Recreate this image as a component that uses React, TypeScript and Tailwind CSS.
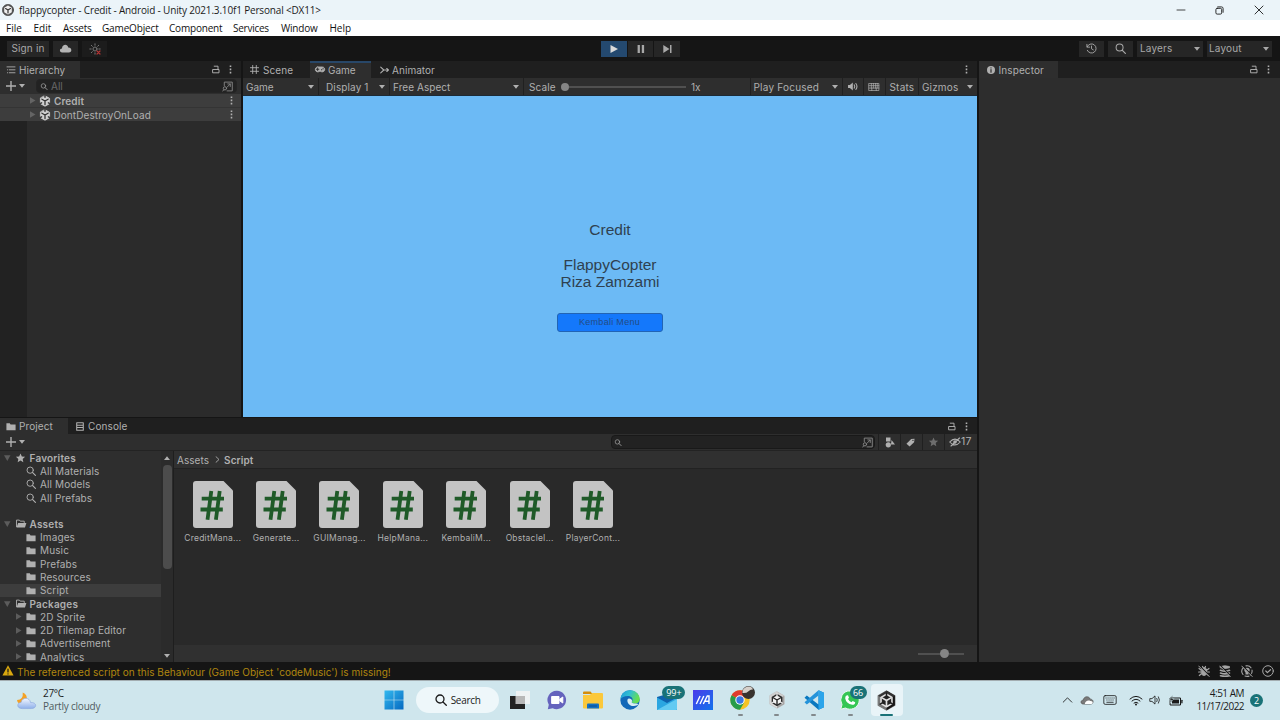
import type { ReactNode } from "react";

type IconProps = { className?: string; box?: string; children: ReactNode };

function Icon({ className = "w-[11px] h-[11px]", box = "0 0 16 16", children }: IconProps) {
  return (
    <svg
      viewBox={box}
      className={`shrink-0 ${className}`}
      fill="none"
      stroke="currentColor"
      strokeWidth="1.4"
      strokeLinecap="round"
      strokeLinejoin="round"
    >
      {children}
    </svg>
  );
}

const Caret = ({ className = "" }: { className?: string }) => (
  <Icon box="0 0 6 4" className={`w-[6px] h-[4px] ${className}`}>
    <path d="M0 0h6L3 3.8z" fill="currentColor" stroke="none" />
  </Icon>
);

const Dots = ({ className = "" }: { className?: string }) => (
  <Icon box="0 0 3 9" className={`w-[3px] h-[9px] ${className}`}>
    <path d="M.7.4h1.6v1.6H.7zM.7 3.6h1.6v1.6H.7zM.7 6.8h1.6v1.6H.7z" fill="currentColor" stroke="none" />
  </Icon>
);

const Lock = ({ className = "" }: { className?: string }) => (
  <Icon box="0 0 8 9" className={`w-[8px] h-[9px] ${className}`}>
    <path d="M1 4.500h6v3.300H1zM2.200 1.200H6v3.300" strokeWidth=".95" />
  </Icon>
);

const Plus = () => (
  <Icon box="0 0 12 12" className="w-[12px] h-[12px]">
    <path d="M6 1v10M1 6h10" strokeWidth="1.4" strokeLinecap="butt" />
  </Icon>
);

const Magnifier = ({ className = "w-[10px] h-[10px]" }: { className?: string }) => (
  <Icon box="0 0 12 12" className={className}>
    <circle cx="5" cy="5" r="3.8" strokeWidth="1.1" />
    <path d="m8 8 3.3 3.3" strokeWidth="1.4" />
  </Icon>
);

const SearchPick = () => (
  <Icon box="0 0 12 12" className="w-[11px] h-[11px]">
    <path d="M2.500 5V1.200h8.700v9.600H5.500M5.500 6.800 9 3.200M6.300 3.200H9V6" strokeWidth="1" />
    <circle cx="3.2" cy="8" r="1.8" strokeWidth="1" />
    <path d="M2 9.500.8 11" strokeWidth="1" />
  </Icon>
);

const UnityScene = () => (
  <Icon box="0 0 12 12" className="w-[12px] h-[12px]">
    <path
      d="M6 .8 10.6 3.3v5.4L6 11.2 1.4 8.7V3.3z"
      fill="#d0d0d0"
      stroke="#d0d0d0"
      strokeWidth=".8"
    />
    <path d="M6 6v3.600M6 6 2.900 4.200M6 6l3.100-1.800" stroke="#333" strokeWidth="1.300" />
    <path d="M6 0v2.200M.6 8.900l2-1.100M11.400 8.900l-2-1.100" stroke="#3c3c3c" strokeWidth="1.500" />
  </Icon>
);

const Folder = () => (
  <Icon box="0 0 12 10" className="w-[10px] h-[9px]">
    <path d="M.5 1h4l1 1.6h6V9.5H.5z" fill="currentColor" stroke="none" />
  </Icon>
);

const FolderOpen = () => (
  <Icon box="0 0 12 10" className="w-[12px] h-[9px]">
    <path d="M1 8.5V1.2h3.2l1 1.2H9.6V4" strokeWidth="1" />
    <path d="M2.8 4.4h9.2L10.4 9.4H1z" fill="currentColor" stroke="none" />
  </Icon>
);

const Star = ({ className = "w-[11px] h-[11px]" }: { className?: string }) => (
  <Icon box="0 0 12 12" className={className}>
    <path d="m6 .6 1.6 3.6 3.9.4-2.9 2.6.8 3.9L6 9.1l-3.4 2 .8-3.9L.5 4.6l3.9-.4z" fill="currentColor" stroke="none" />
  </Icon>
);

function TitleBar() {
  return (
    <div className="flex h-[20px] shrink-0 items-center bg-[#ebf4f9] font-['Open_Sans',sans-serif] text-[10px] text-[#1b1b1b]">
      <Icon box="0 0 12 12" className="ml-[2px] h-[12px] w-[12px]">
        <circle cx="6" cy="6" r="5.7" fill="#555" stroke="#333" strokeWidth=".5" />
        <path d="m6 1.6 3.8 2.1v4.500L6 10.400 2.200 8.200V3.700z" fill="#eee" stroke="none" />
        <path d="M6 6v3M6 6 3.600 4.600M6 6l2.400-1.400" stroke="#333" strokeWidth="1.200" />
      </Icon>
      <span className="ml-[5px] w-[320px] whitespace-nowrap tracking-[-0.165px]">
        flappycopter - Credit - Android - Unity 2021.3.10f1 Personal &lt;DX11&gt;
      </span>
      <div className="ml-auto flex items-center pr-[16px]">
        <Icon box="0 0 10 10" className="mr-[29px] h-[10px] w-[10px]">
          <path d="M1 5h8" strokeWidth=".8" />
        </Icon>
        <Icon box="0 0 10 10" className="mr-[30px] h-[9px] w-[9px]">
          <rect x="1" y="2.6" width="6.4" height="6.4" rx="1.4" strokeWidth="1" />
          <path d="M3 1h4.2Q9 1 9 2.8V7" strokeWidth="1" />
        </Icon>
        <Icon box="0 0 10 10" className="h-[10px] w-[10px]">
          <path d="m1 1 8 8M9 1 1 9" strokeWidth=".9" />
        </Icon>
      </div>
    </div>
  );
}

function MenuBar() {
  return (
    <div className="flex h-[16px] shrink-0 items-center bg-white pl-[6px] font-['Open_Sans',sans-serif] text-[10px] text-[#111]">
      <span className="w-[27.500px]">File</span>
      <span className="w-[29.500px]">Edit</span>
      <span className="w-[39px] tracking-[-0.2px]">Assets</span>
      <span className="w-[67px] tracking-[-0.15px]">GameObject</span>
      <span className="w-[64px] tracking-[-0.2px]">Component</span>
      <span className="w-[48px] tracking-[-0.25px]">Services</span>
      <span className="w-[48.500px] tracking-[-0.2px]">Window</span>
      <span>Help</span>
    </div>
  );
}

function Toolbar() {
  return (
    <div className="flex h-[25px] shrink-0 items-center bg-[#151515] text-[#a8a8a8]">
      <div className="ml-[7px] flex h-[16px] w-[42px] items-center justify-center bg-[#262626] pb-px tracking-[0.15px]">Sign in</div>
      <div className="ml-[4px] flex h-[16px] w-[25px] items-center justify-center bg-[#262626]">
        <Icon box="0 0 14 10" className="h-[9px] w-[13px]">
          <path d="M3.3 9.4C-.2 9.2.2 5 3.1 5 3.3 0 9.3-.5 10 3.8c4.500-.2 4.500 5.500.8 5.600z" fill="#b4b4b4" stroke="none" />
        </Icon>
      </div>
      <div className="ml-[4px] flex h-[16px] w-[25px] items-center justify-center bg-[#1c1c1c]">
        <Icon box="0 0 12 12" className="h-[12px] w-[12px] text-[#777]">
          <circle cx="6" cy="6" r="2" strokeWidth="1" />
          <path d="M6 .8v1.400M6 9.800v1.400M.8 6h1.400M9.800 6h1.400M2.300 2.300l1 1M9.700 2.300l-1 1M2.300 9.700l1-1" strokeWidth="1" />
          <path d="m8 8 3 3M11 8l-3 3" stroke="#b03434" strokeWidth="1.2" />
        </Icon>
      </div>
      <div className="ml-[494px] flex gap-px">
        <div className="flex h-[16px] w-[26px] items-center justify-center bg-[#24496f] text-[#dadada]">
          <Icon box="0 0 8 8" className="h-[8px] w-[8px]"><path d="M.5 0 8 4 .5 8z" fill="currentColor" stroke="none" /></Icon>
        </div>
        <div className="flex h-[16px] w-[25px] items-center justify-center bg-[#262626]">
          <Icon box="0 0 8 8" className="h-[8px] w-[8px]"><path d="M.6 0h2.300v8H.6zM4.800 0h2.300v8H4.800z" fill="currentColor" stroke="none" /></Icon>
        </div>
        <div className="flex h-[16px] w-[26px] items-center justify-center bg-[#262626]">
          <Icon box="0 0 9 8" className="h-[8px] w-[9px]"><path d="M.3 0 6.500 4 .3 8zM7 0h1.500v8H7z" fill="currentColor" stroke="none" /></Icon>
        </div>
      </div>
      <div className="ml-auto flex pr-[8px]">
        <div className="flex h-[16px] w-[25px] items-center justify-center bg-[#262626]">
          <Icon box="0 0 12 12" className="h-[11px] w-[11px]">
            <path d="M1.300 4.200A5 5 0 1 1 1.400 8M1 1.500v3h3M6 3.300v3l2 1.200" strokeWidth="1" />
          </Icon>
        </div>
        <div className="ml-[4px] flex h-[16px] w-[25px] items-center justify-center bg-[#262626]">
          <Magnifier className="h-[11px] w-[11px]" />
        </div>
        <div className="ml-[4px] flex h-[16px] w-[66px] items-center justify-between bg-[#262626] pl-[3px] pr-[3px] tracking-[0.15px]">
          <span className="mb-px">Layers</span> <Caret />
        </div>
        <div className="ml-[4px] flex h-[16px] w-[65px] items-center justify-between bg-[#262626] pl-[2px] pr-[3px] tracking-[0.15px]">
          <span className="mb-px">Layout</span> <Caret />
        </div>
      </div>
    </div>
  );
}

function HierarchyRow({ name, bold }: { name: string; bold?: boolean }) {
  return (
    <div className="flex h-[13px] items-center bg-[#3d3d3d] pl-[30px] pr-[8px]">
      <Icon box="0 0 6 7" className="mr-[3px] h-[7px] w-[6px] text-[#646464]">
        <path d="M0 .3 5.500 3.500 0 6.700z" fill="currentColor" stroke="none" />
      </Icon>
      <UnityScene />
      <span className={bold ? "ml-[3px] font-semibold tracking-[0.1px]" : "ml-[2.500px] tracking-[0.080px]"}>{name}</span>
      <Dots className="ml-auto" />
    </div>
  );
}

function Hierarchy() {
  return (
    <section className="flex w-[241px] flex-col bg-[#2b2b2b]">
      <div className="flex h-[17px] items-center bg-[#1f1f1f]">
        <div className="flex h-full w-[80px] items-center bg-[#2e2e2e] pl-[6px]">
          <Icon box="0 0 10 9" className="mr-[3px] h-[8px] w-[10px]">
            <path d="M.5 1h9M3 4.300h6.500M3 7.600h6.500M1 4.300h.2M1 7.600h.2" strokeWidth="1" />
          </Icon>
          <span className="tracking-[0.05px]">Hierarchy</span>
        </div>
        <Lock className="ml-auto mr-[9px]" />
        <Dots className="mr-[9px]" />
      </div>
      <div className="flex h-[16px] items-center bg-[#2e2e2e] pl-[5px]">
        <Plus />
        <Caret className="ml-[2px]" />
        <div className="ml-[11px] flex h-[14px] w-[201px] items-center rounded-[4px] border border-[#242424] bg-[#222] pl-[3px] pr-[3px]">
          <Magnifier className="h-[7px] w-[8px]" />
          <span className="ml-[3px] text-[#686868]">All</span>
          <span className="ml-auto text-[#888]"><SearchPick /></span>
        </div>
      </div>
      <div className="flex flex-1 flex-col bg-[linear-gradient(to_right,#222_27px,#2b2b2b_27px)]">
        <HierarchyRow name="Credit" bold />
        <div className="h-px bg-[#343434]" />
        <HierarchyRow name="DontDestroyOnLoad" />
      </div>
    </section>
  );
}

function GameView() {
  return (
    <section className="flex w-[734px] flex-col">
      <div className="flex h-[17px] items-center bg-[#1f1f1f]">
        <div className="flex h-full w-[67px] items-center pl-[7px]">
          <Icon box="0 0 10 10" className="mr-[4px] h-[9px] w-[9px]">
            <path d="M3 .5v9M7 .5v9M.5 3h9M.5 7h9" strokeWidth="1" />
          </Icon>
          <span className="tracking-[0.1px]">Scene</span>
        </div>
        <div className="flex h-full w-[61px] items-center border-t-2 border-[#284768] bg-[#2e2e2e] pb-[2px] pl-[4px]">
          <Icon box="0 0 12 8" className="mr-[2px] h-[7px] w-[12px]">
            <path d="M3.400 1h5.200a2.900 2.900 0 1 1-1.700 5.300H5.100A2.900 2.900 0 1 1 3.400 1z" strokeWidth=".8" fill="currentColor" />
            <path d="M1.900 3.700h2.800M3.300 2.300v2.800M7.600 4.300h.5M9.300 3.200h.5" stroke="#2a2a2a" strokeWidth="1.100" />
          </Icon>
          <span>Game</span>
        </div>
        <div className="flex h-full items-center pl-[9px]">
          <Icon box="0 0 10 8" className="mr-[3px] h-[8px] w-[9px]">
            <path d="M.8.8 4.200 4 .8 7.200M4.200 4h5M7.500 2.300 9.400 4 7.500 5.700" strokeWidth="1.200" />
          </Icon>
          <span className="tracking-[0.05px]">Animator</span>
        </div>
        <Dots className="ml-auto mr-[9px]" />
      </div>
      <div className="flex h-[18px] items-center border-b border-[#1d2a35] bg-[#2e2e2e]">
        <div className="flex h-full w-[76px] items-center justify-between border-r border-[#202020] pl-[3px] pr-[4px]">Game <Caret /></div>
        <div className="flex h-full w-[71px] items-center justify-between border-r border-[#202020] pl-[7px] pr-[4px]">
          <span className="whitespace-nowrap tracking-[0.120px]">Display 1</span> <Caret />
        </div>
        <div className="flex h-full w-[133px] items-center justify-between pl-[3px] pr-[4px] tracking-[0.050px]">Free Aspect <Caret /></div>
        <div className="flex h-full w-[227px] items-center border-l border-[#202020] pl-[5px]">
          <span className="w-[32px] tracking-[0.150px]">Scale</span>
          <span className="size-[8px] rounded-full bg-[#858585]" />
          <span className="h-[2px] w-[117px] bg-[#505050]" />
          <span className="ml-[5px]">1x</span>
        </div>
        <div className="flex h-full w-[92px] items-center justify-between whitespace-nowrap border-l border-[#202020] pl-[2.500px] pr-[4px] tracking-[0.220px]">Play Focused <Caret /></div>
        <div className="flex h-full w-[21px] items-center justify-center border-l border-[#202020]">
          <Icon box="0 0 12 10" className="h-[9px] w-[12px]">
            <path d="M.5 3.200h2L5.800.5v9L2.500 6.800h-2z" fill="currentColor" stroke="none" />
            <path d="M7.300 3.200q1.300 1.800 0 3.600M9.200 1.700q2.400 3.300 0 6.600" strokeWidth="1.200" />
          </Icon>
        </div>
        <div className="flex h-full w-[22px] items-center justify-center border-l border-[#202020] pr-px">
          <Icon box="0 0 12 9" className="h-[8px] w-[12px]">
            <path d="M.5.5h11v8H.5zM.5 3h11M.5 5.700h11M3 .5v5.200M5.300.5v5.200M7.600.5v5.200M9.600.5v5.200M3.500 5.700v2.800M8.500 5.700v2.800" strokeWidth=".8" />
          </Icon>
        </div>
        <div className="flex h-full w-[33px] items-center border-l border-[#202020] pl-[3.500px] tracking-[0.2px]">Stats</div>
        <div className="flex h-full flex-1 items-center justify-between border-l border-[#202020] pl-[3px] pr-[4px] tracking-[0.150px]">Gizmos <Caret /></div>
      </div>
      <div className="flex flex-1 flex-col items-center bg-[#6cbaf5] pt-[125px] font-['Liberation_Sans',Arial,sans-serif] text-[#2f4150]">
        <div className="text-center text-[15.5px] leading-[17.400px]">
          <p>Credit</p>
          <p className="h-[17.400px]" />
          <p>FlappyCopter</p>
          <p>Riza Zamzami</p>
        </div>
        <div className="mr-px mt-[22px] flex h-[19px] w-[106px] items-center justify-center rounded-[3px] border border-[#2264b4] bg-[#1478fb] text-[9px] tracking-[0.300px] text-[#234b83]">
          Kembali Menu
        </div>
      </div>
    </section>
  );
}

type Node = { label: string; kind: "star" | "search" | "open" | "folder" | "package" | "gap"; selected?: boolean };

const tree: Node[] = [
  { label: "Favorites", kind: "star" },
  { label: "All Materials", kind: "search" },
  { label: "All Models", kind: "search" },
  { label: "All Prefabs", kind: "search" },
  { label: "", kind: "gap" },
  { label: "Assets", kind: "open" },
  { label: "Images", kind: "folder" },
  { label: "Music", kind: "folder" },
  { label: "Prefabs", kind: "folder" },
  { label: "Resources", kind: "folder" },
  { label: "Script", kind: "folder", selected: true },
  { label: "Packages", kind: "open" },
  { label: "2D Sprite", kind: "package" },
  { label: "2D Tilemap Editor", kind: "package" },
  { label: "Advertisement", kind: "package" },
  { label: "Analytics", kind: "package" },
];

function TreeRow({ node }: { node: Node }) {
  if (node.kind === "gap") return <div className="h-[12.900px] shrink-0" />;
  if (node.kind === "star" || node.kind === "open") {
    return (
      <div className="flex h-[13.300px] shrink-0 items-center pl-[4px]">
        <Icon box="0 0 7 6" className="mr-[4px] h-[6px] w-[7px] text-[#5c5c5c]">
          <path d="M0 .3h6.500L3.300 6z" fill="currentColor" stroke="none" />
        </Icon>
        <span className="flex w-[14.500px]">{node.kind === "star" ? <Star className="h-[10px] w-[11px]" /> : <FolderOpen />}</span>
        <span className="font-semibold tracking-[0.2px]">{node.label}</span>
      </div>
    );
  }
  return (
    <div className={`flex h-[13.300px] shrink-0 items-center pl-[16px] ${node.selected ? "bg-[#3d3d3d]" : ""}`}>
      <span className="flex w-[10px] text-[#5c5c5c]">
        {node.kind === "package" && (
          <Icon box="0 0 6 7" className="h-[7px] w-[6px]">
            <path d="M0 .3 5.500 3.500 0 6.700z" fill="currentColor" stroke="none" />
          </Icon>
        )}
      </span>
      <span className="flex w-[14px]">{node.kind === "search" ? <Magnifier /> : <Folder />}</span>
      <span className="whitespace-nowrap tracking-[0.120px]">{node.label}</span>
    </div>
  );
}

const scripts = ["CreditMana...", "Generate...", "GUIManag...", "HelpMana...", "KembaliM...", "ObstacleI...", "PlayerCont..."];

function ScriptFile({ name }: { name: string }) {
  return (
    <div className="flex w-[63.400px] flex-col items-center">
      <Icon box="0 0 40 47" className="h-[47px] w-[40px]">
        <path d="M3 0h27.500L40 9.500V44q0 3-3 3H3q-3 0-3-3V3Q0 0 3 0z" fill="#c3c3c3" stroke="none" />
        <path d="M18.300 10 14.500 38.700M26.700 10 22.900 38.700M8.700 17.700h22.300M7.500 28.500h22.300" stroke="#1f5a28" strokeWidth="3.800" strokeLinecap="butt" />
      </Icon>
      <span className="mt-[4px] whitespace-nowrap text-[8.500px] leading-[12px] tracking-[0.230px] text-[#b0b0b0]">{name}</span>
    </div>
  );
}

function Project() {
  return (
    <section className="flex h-[244px] flex-col bg-[#2e2e2e]">
      <div className="flex h-[16px] items-center bg-[#1f1f1f]">
        <div className="flex h-full w-[68px] items-center bg-[#2e2e2e] pl-[6px]">
          <Folder />
          <span className="ml-[3px] tracking-[0.1px]">Project</span>
        </div>
        <Icon box="0 0 9 10" className="ml-[8px] h-[9px] w-[8px]">
          <path d="M.8.8h7.400v8.400H.8zM.8 3.500h7.400M.8 6.200h7.400" strokeWidth="1.200" />
        </Icon>
        <span className="ml-[4px] tracking-[0.1px]">Console</span>
        <Lock className="ml-auto mr-[9px]" />
        <Dots className="mr-[9px]" />
      </div>
      <div className="flex h-[17px] items-center border-b border-[#232323] pl-[5px]">
        <Plus />
        <Caret className="ml-[2px]" />
        <div className="ml-auto flex h-[14px] w-[264px] items-center rounded-[4px] border border-[#191919] bg-[#222] pl-[2px] pr-px">
          <Magnifier className="h-[7px] w-[8px]" />
          <span className="ml-auto text-[#888]"><SearchPick /></span>
        </div>
        <div className="ml-[3px] flex h-full w-[22px] items-center justify-center border-l border-[#202020]">
          <Icon box="0 0 10 11" className="h-[11px] w-[10px]">
            <path d="M1 .5h4.500v4H1zM6.500 3l3.500 4.500H6z" fill="currentColor" stroke="none" />
            <circle cx="3.300" cy="7.800" r="2.600" fill="currentColor" stroke="none" />
          </Icon>
        </div>
        <div className="flex h-full w-[22px] items-center justify-center border-l border-[#202020] pr-[2px]">
          <Icon box="0 0 10 10" className="h-[9px] w-[9px]">
            <path d="M.5 6.500 5.800 1 9.500.8 9 4.800 4 9.500zM7.700 1.900a.7.700 0 1 0 .1 0z" fill="currentColor" fillRule="evenodd" stroke="none" />
          </Icon>
        </div>
        <div className="flex h-full w-[22px] items-center justify-center border-l border-[#202020] text-[#6e6e6e]"><Star className="h-[10px] w-[11px]" /></div>
        <div className="flex h-full w-[33px] items-center border-l border-[#202020] pl-[4px]">
          <Icon box="0 0 12 10" className="h-[10px] w-[12px]">
            <path d="M.7 5Q6-.8 11.300 5 6 10.800.7 5zM2 9l8.500-8" strokeWidth="1.100" />
            <circle cx="6" cy="5" r="1.800" fill="currentColor" stroke="none" />
          </Icon>
          <span className="mt-px text-[10.500px] tracking-[0.200px]">17</span>
        </div>
      </div>
      <div className="flex min-h-0 flex-1">
        <div className="flex w-[161px] flex-col overflow-hidden">
          {tree.map((node, i) => <TreeRow key={i} node={node} />)}
        </div>
        <div className="flex w-[13px] flex-col items-center border-r border-[#1e1e1e] bg-[#2b2b2b] pb-[4px] pt-[5px]">
          <Caret className="rotate-180" />
          <span className="mt-[5px] h-[104px] w-[9px] rounded-[4px] bg-[#4c4c4c]" />
          <Caret className="mt-auto" />
        </div>
        <div className="flex flex-1 flex-col bg-[#292929]">
          <div className="flex h-[18px] items-center border-b border-[#222] bg-[#303030] pl-[3px]">
            <span className="tracking-[0.050px]">Assets</span>
            <Icon box="0 0 5 8" className="ml-[6px] mr-[4px] h-[7px] w-[5px]"><path d="m.8.8 3.400 3.200L.8 7.200" strokeWidth="1" /></Icon>
            <span className="font-semibold tracking-[0.100px]">Script</span>
          </div>
          <div className="flex flex-1 pl-[7px] pt-[12px]">
            {scripts.map((s) => <ScriptFile key={s} name={s} />)}
          </div>
          <div className="flex h-[17px] items-center justify-end bg-[#303030] pr-[13px]">
            <span className="h-[2px] w-[22px] bg-[#505050]" />
            <span className="size-[9px] rounded-full bg-[#858585]" />
            <span className="h-[2px] w-[15px] bg-[#505050]" />
          </div>
        </div>
      </div>
    </section>
  );
}

function Inspector() {
  return (
    <section className="flex w-[301px] flex-col bg-[#2d2d2d]">
      <div className="flex h-[17px] items-center bg-[#1f1f1f]">
        <div className="flex h-full w-[79px] items-center bg-[#2e2e2e] pl-[8px]">
          <Icon box="0 0 9 9" className="mr-[3.500px] h-[8px] w-[8px]">
            <circle cx="4.500" cy="4.500" r="4.500" fill="currentColor" stroke="none" />
            <path d="M4.500 4v3M4.500 2v.2" stroke="#2a2a2a" strokeWidth="1.300" />
          </Icon>
          <span className="tracking-[0.1px]">Inspector</span>
        </div>
        <Lock className="ml-auto mr-[9px]" />
        <Dots className="mr-[10px]" />
      </div>
    </section>
  );
}

function StatusBar() {
  return (
    <div className="flex h-[18px] shrink-0 items-center bg-[#151515] pl-[2px] text-[#b0860f]">
      <Icon box="0 0 12 11" className="mb-px h-[11px] w-[12px]">
        <path d="M6 .3 11.600 10.500H.4z" fill="#d9a80f" stroke="none" />
        <path d="M6 4v3M6 8.800v.1" stroke="#151515" strokeWidth="1.200" />
      </Icon>
      <span className="ml-[3px] mt-px whitespace-nowrap tracking-[0.030px]">The referenced script on this Behaviour (Game Object 'codeMusic') is missing!</span>
      <div className="ml-auto flex gap-[9.500px] pr-[6px] text-[#a5a5a5]">
        <Icon box="0 0 12 12" className="h-[12px] w-[12px]">
          <path d="M3.500 4q2.500-3 5 0v5q-2.500 3-5 0z" fill="currentColor" strokeWidth="1" />
          <path d="M4.500 1.500 5 2.500M7.500 1.500 7 2.500M1 3.500 3 5M.6 7H3M1.300 10.500 3.200 9M11 3.500 9 5M11.400 7H9M10.700 10.500 8.800 9" strokeWidth="1.200" />
          <path d="m1.700 1 10 10" stroke="#151515" strokeWidth="1.200" /><path d="m.7 1 10.500 10.500" strokeWidth="1" />
        </Icon>
        <Icon box="0 0 12 12" className="h-[12px] w-[12px]">
          <path d="M1.500 1.500q4.500-1.500 9 0v1.300q-4.500 1.500-9 0z" fill="currentColor" strokeWidth=".8" />
          <path d="M1.500 5.300q4.500 1.800 9 0M1.500 8q4.500 1.800 9 0M1.500 10.700q4.500 1 9 0" strokeWidth="1.600" />
          <path d="m1.700 1 10 10" stroke="#151515" strokeWidth="1.200" /><path d="m.7 1 10.500 10.500" strokeWidth="1" />
        </Icon>
        <Icon box="0 0 12 12" className="h-[12px] w-[12px]">
          <path d="M2 9.500A5.300 5.300 0 0 1 2.500 2.500M5 .9Q8.500.3 10 2.800M11 5Q11.500 8 9.700 9.800M4 11q2 .7 4 .1" strokeWidth="1.100" />
          <path d="M6 2.800q3.300.2 2.600 3.200L7.500 7.500v2h-3v-2L3.400 6Q2.700 3 6 2.800z" fill="currentColor" stroke="none" />
          <path d="m1.700 1 10 10" stroke="#151515" strokeWidth="1.200" /><path d="m.7 1 10.500 10.500" strokeWidth="1" />
        </Icon>
        <Icon box="0 0 12 12" className="h-[12px] w-[12px]">
          <circle cx="6" cy="6" r="5.300" strokeWidth="1" /><path d="m3.800 6 1.600 1.600L8.500 4.700" strokeWidth="1.200" />
        </Icon>
      </div>
    </div>
  );
}

function UnityCube({ dark }: { dark?: boolean }) {
  return (
    <Icon box="0 0 20 20" className={dark ? "h-[21px] w-[21px]" : "h-[18px] w-[18px]"}>
      <path d="m10 .8 8 4.600v9.200l-8 4.600-8-4.600V5.400z" fill={dark ? "#777" : "#dedede"} stroke={dark ? "#777" : "#c5c5c5"} strokeWidth="1" />
      <path d="m10 .8 8 4.600v9.200l-8 4.600V10z" fill={dark ? "#151515" : "#a5a5a5"} stroke="none" />
      <path d="M10 10 2 5.400 10 .8l8 4.600z" fill={dark ? "#333" : "#cfcfcf"} stroke="none" />
      <path d="m10 4 5.200 3v6L10 16l-5.200-3V7z" fill={dark ? "#222" : "#f2f2f2"} stroke={dark ? "#e2e2e2" : "#2b2b2b"} strokeWidth="1.500" />
      <path d="M10 10v5M10 10 5.800 7.500M10 10l4.200-2.500" stroke={dark ? "#e2e2e2" : "#2b2b2b"} strokeWidth="1.600" />
      <path d="M10 3v2.500M4 13.500l2-1.200M16 13.500l-2-1.200" stroke={dark ? "#222" : "#ddd"} strokeWidth="1.500" />
    </Icon>
  );
}

function TaskItem({ children, running }: { children: ReactNode; running?: boolean }) {
  return (
    <div className="relative flex h-full w-[36.700px] items-center justify-center pb-px">
      {children}
      {running && <span className="absolute bottom-[4px] h-[2px] w-[5px] rounded-full bg-[#82898c]" />}
    </div>
  );
}

function Badge({ children }: { children: ReactNode }) {
  return (
    <span className="absolute right-[2px] top-[5px] flex h-[13px] min-w-[17px] items-center justify-center rounded-full bg-[#197277] px-[2px] text-[9px] leading-none text-white">
      {children}
    </span>
  );
}

function Taskbar() {
  return (
    <div className="flex h-[40px] shrink-0 items-center border-t border-[#a3adb1] bg-[#cfe6ed] font-['Open_Sans',sans-serif] text-[10px] text-[#1a1a1a]">
      <div className="flex w-[376px] items-center pb-px pl-[16px]">
        <Icon box="0 0 22 20" className="h-[19px] w-[21px]">
          <defs>
            <linearGradient id="cloud" x1="0" y1="0" x2="0" y2="1"><stop stopColor="#f1f6ff" /><stop offset="1" stopColor="#8fb0ea" /></linearGradient>
          </defs>
          <path d="M7 1.500Q12.500 4 11 9t-7 5Q1 12.500 1 9.500 8 9 7 1.500z" fill="#f4a125" stroke="none" />
          <path d="M6 18.500c-6-.3-5-6.500-.7-6.500 1.200-6 9.300-5.500 10 .2 7-.7 7 6.300 1.200 6.300z" fill="url(#cloud)" stroke="#8ba8de" strokeWidth=".7" />
        </Icon>
        <div className="ml-[6px] leading-[13px]">
          <p className="tracking-[-0.3px]">27°C</p>
          <p className="tracking-[-0.200px] text-[#505c60]">Partly cloudy</p>
        </div>
      </div>
      <div className="flex h-full items-center">
        <TaskItem>
          <Icon box="0 0 20 20" className="h-[20px] w-[20px]">
            <defs><linearGradient id="win" x1="0" y1="0" x2="1" y2="1"><stop stopColor="#33b9ef" /><stop offset="1" stopColor="#0669c1" /></linearGradient></defs>
            <path d="M.5.5h9.200v9.200H.5zM10.300.5h9.200v9.200h-9.200zM.5 10.300h9.200v9.200H.5zM10.300 10.300h9.200v9.200h-9.200z" fill="url(#win)" stroke="none" />
          </Icon>
        </TaskItem>
        <div className="mb-px ml-[3px] flex h-[26px] w-[83px] items-center rounded-full bg-[#eef7fa] pl-[19px]">
          <Icon box="0 0 12 12" className="h-[12px] w-[12px]"><circle cx="5" cy="5" r="4" strokeWidth="1.300" /><path d="m8 8 3.300 3.300" strokeWidth="1.300" /></Icon>
          <span className="ml-[4px] tracking-[-0.300px]">Search</span>
        </div>
        <div className="ml-[3px] flex h-full items-center">
          <TaskItem>
            <Icon box="0 0 20 20" className="h-[20px] w-[20px]">
              <path d="M6 1h14v13H6z" fill="#eef2f3" stroke="none" />
              <path d="M0 6h15v13H0z" fill="#222" stroke="none" />
              <path d="M5.500 6H15v8H5.500z" fill="#b8b8b8" stroke="none" />
            </Icon>
          </TaskItem>
          <TaskItem>
            <Icon box="0 0 20 20" className="h-[20px] w-[20px]">
              <path d="M10 .8a9.200 9.200 0 1 1-4.300 17.400L.8 19.200l1-4.500A9.200 9.200 0 0 1 10 .8z" fill="#6563bd" stroke="none" />
              <path d="M5 6.500h7v7H5zM13 9l2.800-2v6L13 11z" fill="#fff" stroke="#fff" strokeWidth="1" />
            </Icon>
          </TaskItem>
          <TaskItem>
            <Icon box="0 0 20 18" className="h-[18px] w-[20px]">
              <path d="M0 1.500Q0 .5 1 .5h6.500l2 2.500H0z" fill="#d48c0a" stroke="none" />
              <path d="M0 4h6.500l3-2H19q1 0 1 1v13.500q0 1-1 1H1q-1 0-1-1z" fill="#fbc83b" stroke="none" />
              <path d="M4 17.500v-4q0-1 1-1h10q1 0 1 1v4z" fill="#1470c3" stroke="none" />
              <path d="M6.500 15h7" stroke="#0b4c91" strokeWidth="1" />
            </Icon>
          </TaskItem>
          <TaskItem>
            <Icon box="0 0 20 20" className="h-[20px] w-[20px]">
              <defs>
                <linearGradient id="edgeTop" x1="0" y1="0" x2="1" y2=".4"><stop stopColor="#1d98dc" /><stop offset=".5" stopColor="#31bfd1" /><stop offset="1" stopColor="#66df50" /></linearGradient>
              </defs>
              <circle cx="10" cy="10" r="9.700" fill="#1268b8" stroke="none" />
              <path d="M.4 9C1.200 3.700 5 .3 10 .3c5.800 0 9.700 4.200 9.700 8.700 0 3-2.400 4.600-4.900 4.600-2.800 0-3.800-1.300-2.700-2.300C13.800 8.300 11 6 8 6 4 6 1.500 7.500.4 9z" fill="url(#edgeTop)" stroke="none" />
              <path d="M7.500 9.500c-.8 3.600 2.500 7 6.500 6.500 1.700-.2 3.300-.8 4.300-1.800.3-.2-1.700-.6-3.500-.6-2.800 0-3.800-1.300-2.700-2.300C12.500 9 8.500 7.300 7.500 9.500z" fill="#d8eef4" stroke="none" />
            </Icon>
          </TaskItem>
          <TaskItem>
            <Icon box="0 0 20 16" className="mt-[3px] h-[16px] w-[20px]">
              <path d="M0 3 10 0l10 3v12q0 1-1 1H1q-1 0-1-1z" fill="#0f63ad" stroke="none" />
              <path d="M0 3.500 10 9l10-5.500V15q0 1-1 1H1q-1 0-1-1z" fill="#2ba6e1" stroke="none" />
              <path d="M0 16 20 5v10q0 1-1 1z" fill="#62caf2" stroke="none" />
            </Icon>
            <span className="absolute left-[14px] top-[5px] flex h-[13px] w-[23px] items-center justify-center rounded-full bg-[#197277] text-[9px] leading-none text-white">99+</span>
          </TaskItem>
          <TaskItem>
            <Icon box="0 0 20 20" className="h-[20px] w-[20px]">
              <defs><linearGradient id="armoury" x1="0" y1="0" x2="1" y2="1"><stop stopColor="#4b3bea" /><stop offset="1" stopColor="#1273ec" /></linearGradient></defs>
              <path d="M0 0h20v20H0z" fill="url(#armoury)" stroke="none" />
              <path d="m3.300 14 3.800-8M7 14l3.800-8M10.300 14l4-8h1.700v8M12.500 11.200H16" stroke="#fff" strokeWidth="1.400" strokeLinecap="butt" strokeLinejoin="miter" />
            </Icon>
          </TaskItem>
          <TaskItem running>
            <Icon box="0 0 20 20" className="h-[20px] w-[20px]">
              <circle cx="10" cy="10" r="9.700" fill="#f6c324" stroke="none" />
              <path d="M10 10 1.600 5.150A9.700 9.700 0 0 1 18.400 5.150z" fill="#df3b2e" stroke="none" />
              <path d="M10 10 1.600 5.150A9.700 9.700 0 0 0 10 19.700l4-7z" fill="#289c48" stroke="none" />
              <circle cx="10" cy="10" r="4.700" fill="#fff" stroke="none" /><circle cx="10" cy="10" r="3.700" fill="#3b77e0" stroke="none" />
            </Icon>
            <Icon box="0 0 13 13" className="absolute right-[4px] top-[5px] h-[13px] w-[13px]">
              <circle cx="6.500" cy="6.500" r="6.500" fill="#38332f" stroke="none" />
              <path d="M.8 4Q3 .5 6.500.5q3.500 0 4.500 3Q8.500 3 6.500 5.200T.4 7z" fill="#d6d0ca" stroke="none" />
            </Icon>
          </TaskItem>
          <TaskItem running><UnityCube /></TaskItem>
          <TaskItem running>
            <Icon box="0 0 20 20" className="h-[20px] w-[20px]">
              <path d="M14.500.3 20 2.800v14.400l-5.500 2.500-14-12L2.800 5.500l11.700 9z" fill="#0a78bf" stroke="none" />
              <path d="M14.500 5.500 2.800 14.500.5 12.300 14.500.3z" fill="#2493da" stroke="none" />
              <path d="M14.500.3 20 2.800v14.400l-5.500 2.500z" fill="#2ba4ea" stroke="none" />
            </Icon>
          </TaskItem>
          <TaskItem running>
            <Icon box="0 0 20 20" className="h-[20px] w-[20px]">
              <path d="M10 .8a9.200 9.200 0 1 1-4.500 17.200L.8 19.200 2 14.600A9.200 9.200 0 0 1 10 .8z" fill="#35c653" stroke="#eaf7ef" strokeWidth="1" />
              <path d="M6.500 5.500 8 5.300l1 2.500-1 1.300q1.200 2.300 3.500 3.200l1.200-1.300 2.500 1.200q-.2 2.700-3 2.600Q6 13.500 5.200 8.200q0-1.900 1.300-2.700z" fill="#fff" stroke="none" />
            </Icon>
            <Badge>66</Badge>
          </TaskItem>
          <div className="relative mb-px ml-[2px] flex h-[32px] w-[32px] items-center justify-center rounded-[4px] bg-[#e9f4f8]">
            <UnityCube dark />
            <span className="absolute bottom-0 h-[2px] w-[13px] rounded-full bg-[#197277]" />
          </div>
        </div>
      </div>
      <div className="ml-auto flex items-center pb-px pr-[17px]">
        <Icon box="0 0 12 7" className="h-[6px] w-[11px]"><path d="m1 6 5-5 5 5" strokeWidth="1" /></Icon>
        <Icon box="0 0 15 10" className="ml-[7px] h-[9px] w-[14px]">
          <path d="M3.500 9C-.3 9 .2 4.500 3.500 4.500 4-.2 10-.2 11 3.500c4.300 0 4.300 5.500.5 5.500z" fill="#7a7a7a" stroke="#555" strokeWidth=".8" />
          <path d="M5 9c0-3 4-5 6-3.500C15 5 14.500 9 11.500 9z" fill="#fff" stroke="none" />
        </Icon>
        <Icon box="0 0 15 11" className="ml-[9px] h-[10px] w-[14px]">
          <rect x=".7" y=".7" width="13.600" height="9.600" rx="1.500" strokeWidth=".9" />
          <path d="M3 3.300h.3M5.200 3.300h.3M7.400 3.300h.3M9.600 3.300h.3M11.800 3.300h.3M4 5.500h.3M6.300 5.500h.3M8.500 5.500h.3M10.700 5.500h.3M4 8h7" strokeWidth=".9" />
        </Icon>
        <Icon box="0 0 14 11" className="ml-[12px] h-[11px] w-[14px]">
          <path d="M1 4q6-5.500 12 0M3 6q4-3.600 8 0M5 8q2-1.800 4 0" strokeWidth="1" /><circle cx="7" cy="9.500" r="1" fill="currentColor" stroke="none" />
        </Icon>
        <Icon box="0 0 12 11" className="ml-[6px] h-[10px] w-[12px]">
          <path d="M.7 4h2L6 1v9L2.700 7h-2zM8 3.700q1.200 1.800 0 3.600M9.800 2q2.300 3.500 0 7" strokeWidth=".9" />
        </Icon>
        <Icon box="0 0 14 11" className="ml-[8px] h-[11px] w-[14px]">
          <path d="M1.500 3h10v7h-10z" strokeWidth="1" /><path d="M3 4.500h7v4H3z" fill="currentColor" stroke="none" /><path d="M12.900 5.300v2.500" strokeWidth="1.300" />
          <path d="M3.500 0 .5 5h2L1.500 8 5 3.500H3z" fill="currentColor" stroke="#cfe6ed" strokeWidth=".5" />
        </Icon>
        <div className="ml-[10px] w-[51px] text-right leading-[13px]">
          <p className="whitespace-nowrap tracking-[-0.500px]">4:51 AM</p>
          <p className="whitespace-nowrap tracking-[-0.550px]">11/17/2022</p>
        </div>
        <span className="ml-[6px] flex size-[13px] items-center justify-center rounded-full bg-[#197277] text-[9px] leading-none text-white">2</span>
      </div>
    </div>
  );
}

export default function App() {
  return (
    <div className="flex h-[720px] w-[1280px] flex-col overflow-hidden bg-[#151515] font-['Inter',sans-serif] text-[10px] leading-none text-[#b0b0b0]">
      <TitleBar />
      <MenuBar />
      <Toolbar />
      <main className="flex min-h-0 flex-1 gap-[2px]">
        <div className="flex w-[977px] flex-col">
          <div className="flex h-[356px] gap-[2px]">
            <Hierarchy />
            <GameView />
          </div>
          <div className="mt-px"><Project /></div>
        </div>
        <Inspector />
      </main>
      <StatusBar />
      <Taskbar />
    </div>
  );
}
